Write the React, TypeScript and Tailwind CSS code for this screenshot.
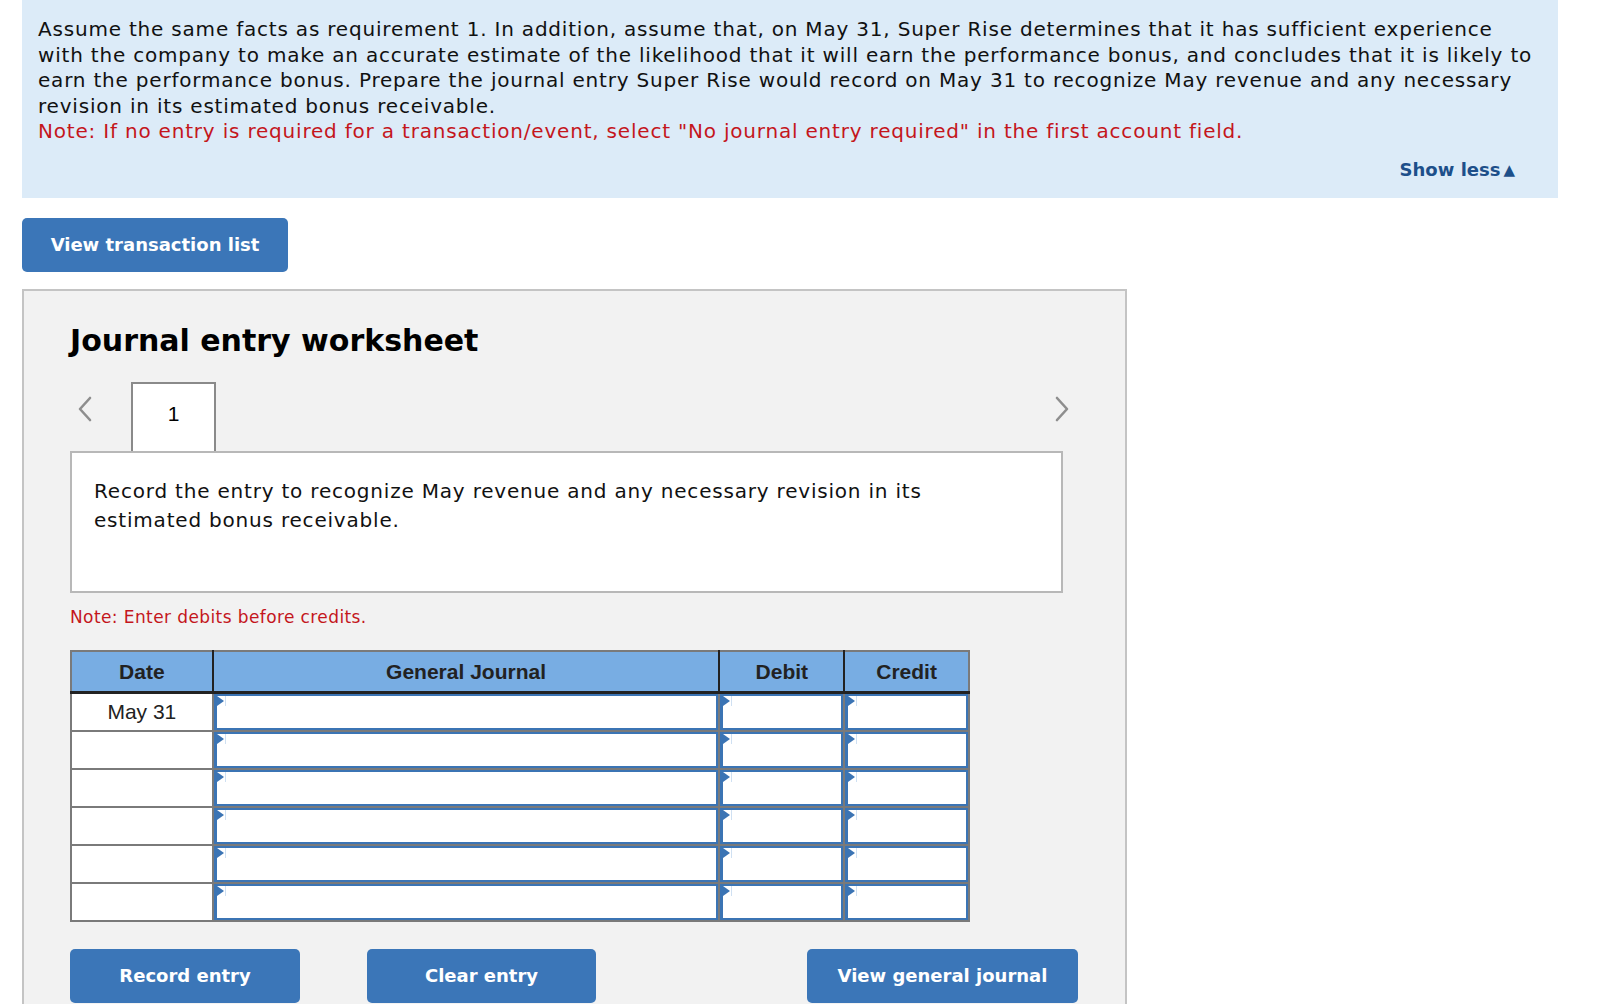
import React from "react";

const verdana = { fontFamily: '"DejaVu Sans", Verdana, sans-serif' };
const arial = { fontFamily: '"Liberation Sans", Arial, sans-serif' };

const Chevron: React.FC<{ dir: "left" | "right" }> = ({ dir }) => (
  <svg width="16" height="26" viewBox="0 0 16 26">
    <polyline
      points={dir === "left" ? "13,2 3,13 13,24" : "3,2 13,13 3,24"}
      fill="none"
      stroke="#8e8e8e"
      strokeWidth="2.6"
      strokeLinecap="round"
      strokeLinejoin="round"
    />
  </svg>
);

// editable cell with the little blue marker in the corner
const InputCell: React.FC = () => (
  <td className="h-[38px] border-2 border-[#7a7a7a] p-0">
    <div className="relative h-full w-full border-2 border-l-[3px] border-[#3b74b4] bg-white">
      <div className="absolute left-0 top-0 h-0 w-0 border-y-[5px] border-l-[7px] border-y-transparent border-l-[#3b74b4]"></div>
      <div className="absolute left-[8px] top-0 h-[10px] w-px bg-[#cfe0f2]"></div>
    </div>
  </td>
);

const App: React.FC = () => {
  const rows = ["May 31", "", "", "", "", ""];

  return (
    <div className="min-h-screen bg-white pl-[22px] text-black" style={verdana}>
      {/* Question panel */}
      <div className="w-[1536px] bg-[#dcebf8] pb-[15px] pl-4 pr-4 pt-[17px]">
        <p className="text-[20px] leading-[25.5px] tracking-[0.8px] text-[#111]">
          Assume the same facts as requirement 1. In addition, assume that, on May 31, Super Rise determines that it has
          sufficient experience with the company to make an accurate estimate of the likelihood that it will earn the
          performance bonus, and concludes that it is likely to earn the performance bonus. Prepare the journal entry
          Super Rise would record on May 31 to recognize May revenue and any necessary revision in its estimated bonus
          receivable.
        </p>
        <p className="text-[20px] leading-[25.5px] tracking-[0.8px] text-[#c4161c]">
          Note: If no entry is required for a transaction/event, select "No journal entry required" in the first account
          field.
        </p>
        <div className="mt-[12px] flex justify-end pr-[27px]">
          <span className="flex items-center gap-[3px] text-[18px] font-bold leading-[26px] text-[#1d4f8a]">
            Show less
            <span className="text-[15px]">▲</span>
          </span>
        </div>
      </div>

      <button className="mt-5 flex h-[54px] w-[266px] items-center justify-center rounded-[5px] bg-[#3b76b8] text-[18px] font-bold text-white">
        View transaction list
      </button>

      {/* Worksheet */}
      <div className="mt-[17px] h-[720px] w-[1105px] border-2 border-[#c4c4c4] bg-[#f2f2f2] pl-[46px] pt-[30px]">
        <h2 className="text-[30px] font-bold leading-[40px]">Journal entry worksheet</h2>

        <div className="mt-[21px] flex w-[1000px] items-start">
          <div className="mt-[14px] flex w-[61px] justify-start pl-[7px]">
            <Chevron dir="left" />
          </div>
          <div className="flex h-[69px] w-[85px] items-center justify-center border-2 border-b-0 border-[#8a8a8a] bg-white pb-[7px] text-[21px]" style={arial}>
            1
          </div>
          <div className="ml-auto mt-[14px]">
            <Chevron dir="right" />
          </div>
        </div>

        <div className="h-[142px] w-[993px] border-2 border-[#b8b8b8] bg-white pl-[22px] pt-[24px]">
          <p className="text-[20px] leading-[29px] tracking-[0.8px] text-[#111]">
            Record the entry to recognize May revenue and any necessary revision in its
            <br />
            estimated bonus receivable.
          </p>
        </div>

        <p className="mt-[12px] text-[17px] leading-[24px] tracking-[0.4px] text-[#c4161c]">Note: Enter debits before credits.</p>

        <table className="mt-[21px] w-[900px] border-collapse border-2 border-[#7a7a7a] text-[21px] text-[#222]" style={arial}>
          <colgroup>
            <col className="w-[142px]" />
            <col className="w-[508px]" />
            <col className="w-[125px]" />
            <col className="w-[125px]" />
          </colgroup>
          <thead>
            <tr className="h-[42px] bg-[#78ade3]">
              <th className="border-2 border-b-[3px] border-[#222] border-l-[#7a7a7a] border-t-[#7a7a7a] font-bold">Date</th>
              <th className="border-2 border-b-[3px] border-[#222] border-t-[#7a7a7a] font-bold">General Journal</th>
              <th className="border-2 border-b-[3px] border-[#222] border-t-[#7a7a7a] font-bold">Debit</th>
              <th className="border-2 border-b-[3px] border-[#222] border-r-[#7a7a7a] border-t-[#7a7a7a] font-bold">Credit</th>
            </tr>
          </thead>
          <tbody>
            {rows.map((d, i) => (
              <tr key={i}>
                <td className="h-[38px] border-2 border-[#7a7a7a] bg-white text-center">{d}</td>
                <InputCell />
                <InputCell />
                <InputCell />
              </tr>
            ))}
          </tbody>
        </table>

        <div className="mt-[27px] flex">
          <button className="h-[54px] w-[230px] rounded-[5px] bg-[#3b76b8] text-[18px] font-bold text-white">Record entry</button>
          <button className="ml-[67px] h-[54px] w-[229px] rounded-[5px] bg-[#3b76b8] text-[18px] font-bold text-white">Clear entry</button>
          <button className="ml-[211px] h-[54px] w-[271px] rounded-[5px] bg-[#3b76b8] text-[18px] font-bold text-white">
            View general journal
          </button>
        </div>
      </div>
    </div>
  );
};

export default App;
